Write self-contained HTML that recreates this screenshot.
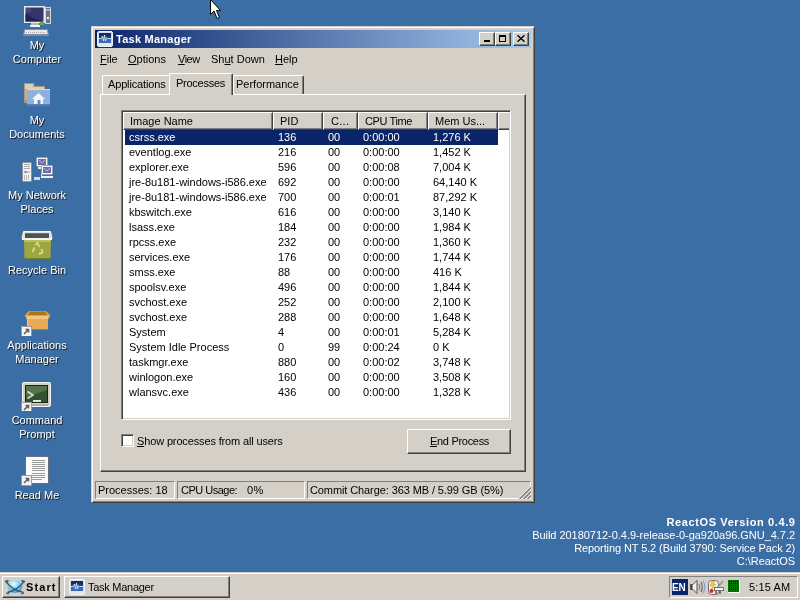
<!DOCTYPE html><html><head><meta charset="utf-8"><style>
*{margin:0;padding:0;box-sizing:border-box}
html,body{width:800px;height:600px;overflow:hidden}
body{background:#3A6EA5;font-family:"Liberation Sans",sans-serif;font-size:11px;color:#000;position:relative}
.a{position:absolute}
.t{position:absolute;white-space:nowrap;line-height:13px;transform:translateZ(0)}
.rz{position:absolute;background:#D4D0C8;border-top:1px solid #fff;border-left:1px solid #fff;border-right:1px solid #404040;border-bottom:1px solid #404040;box-shadow:inset -1px -1px 0 #808080}
.sk{position:absolute;border-top:1px solid #808080;border-left:1px solid #808080;border-right:1px solid #fff;border-bottom:1px solid #fff}
.u{text-decoration:underline;text-underline-offset:1px}
.dl{position:absolute;white-space:nowrap;line-height:13px;color:#fff;text-align:center;text-shadow:1px 1px 0 #1a1a1a;transform:translateZ(0)}
.row{position:absolute;left:0;height:15px;width:386px}
.c{position:absolute;top:0;white-space:nowrap;line-height:15px;transform:translateZ(0)}
</style></head><body>
<svg class="a" style="left:21px;top:4px" width="32" height="32" viewBox="0 0 32 32"><rect x="3" y="2" width="21" height="17" fill="#e4eaf0"/>
<rect x="4.5" y="3.5" width="18" height="14" fill="#34366a"/>
<path d="M4.5 10 L12 14 L22.5 17.5 H4.5Z" fill="#22244e"/>
<rect x="5" y="4" width="5" height="4" fill="#46487c"/>
<rect x="10" y="19" width="8" height="2" fill="#b8b8b8"/>
<rect x="9" y="21" width="10" height="2" fill="#f4f4f4"/>
<rect x="24" y="3" width="6" height="17" fill="#d4d8d0"/>
<rect x="25" y="4" width="4" height="15" fill="#6c7488"/>
<rect x="25" y="5" width="4" height="2" fill="#a0a8b8"/>
<circle cx="27" cy="14" r="1.3" fill="#e8e8e8"/>
<rect x="19" y="18" width="4" height="3" fill="#6aa84a"/>
<path d="M3 25H27L28 32H2Z" fill="#8a8a94"/>
<path d="M4 26H26L26.5 30H3.5Z" fill="#e8e8e8"/>
<path d="M5 28.5H25" stroke="#a8a8b0" stroke-width="1" stroke-dasharray="1,1"/></svg>
<div class="dl" style="left:0;width:74px;top:38px;line-height:14px">My</div>
<div class="dl" style="left:0;width:74px;top:52px;line-height:14px">Computer</div>
<svg class="a" style="left:21px;top:79px" width="32" height="32" viewBox="0 0 32 32"><path d="M3 4H13L14 7H24V24H3Z" fill="#a89a80"/>
<path d="M4 5H12V8H23V10H4Z" fill="#dcd0b4"/>
<path d="M4 12H6M4 14H6M4 16H6M4 18H6M4 20H6" stroke="#d8ccb0"/>
<rect x="6" y="10" width="23" height="16" fill="#8fb0dc"/>
<rect x="6" y="10" width="23" height="1" fill="#c8dcf4"/>
<rect x="6" y="25" width="23" height="2" fill="#5a7cb0"/>
<path d="M17.5 14L11 20H13V25H22V20H24Z" fill="#f4f6fa"/>
<rect x="16.5" y="21" width="3" height="4" fill="#6a8cc0"/></svg>
<div class="dl" style="left:0;width:74px;top:113px;line-height:14px">My</div>
<div class="dl" style="left:0;width:74px;top:127px;line-height:14px">Documents</div>
<svg class="a" style="left:21px;top:154px" width="32" height="32" viewBox="0 0 32 32"><rect x="1.5" y="8.5" width="9" height="19" rx="1" fill="#f4f4f4" stroke="#8a8e96"/>
<rect x="3" y="10" width="6" height="1" fill="#a8a8a8"/><rect x="3" y="12" width="6" height="1" fill="#a8a8a8"/><rect x="3" y="14" width="6" height="1" fill="#a8a8a8"/>
<circle cx="4.5" cy="18" r="1.3" fill="#888"/><rect x="6" y="17.5" width="3" height="1" fill="#999"/>
<path d="M3.5 21V26M5.5 21V26M7.5 21V26" stroke="#b8b8b8"/>
<rect x="15.5" y="3.5" width="11" height="9" rx="1" fill="#f6f6fa" stroke="#9ca0ac"/>
<rect x="17" y="5" width="8" height="6" fill="#6a70a8"/>
<path d="M18 6L21 9L24 6" stroke="#b0b8e0" fill="none"/>
<rect x="17" y="13" width="8" height="2" fill="#f0f0f0"/>
<rect x="20" y="15" width="1" height="7" fill="#e0e0e0"/>
<rect x="20.5" y="11.5" width="11" height="9" rx="1" fill="#f6f6fa" stroke="#9ca0ac"/>
<rect x="22" y="13" width="8" height="6" fill="#6a70a8"/>
<path d="M23 14L26 17L29 14" stroke="#b0b8e0" fill="none"/>
<rect x="20" y="22" width="12" height="2" fill="#f0f0f0"/>
<rect x="13" y="23" width="6" height="3" fill="#d8d8d8"/></svg>
<div class="dl" style="left:0;width:74px;top:188px;line-height:14px">My Network</div>
<div class="dl" style="left:0;width:74px;top:202px;line-height:14px">Places</div>
<svg class="a" style="left:21px;top:229px" width="32" height="32" viewBox="0 0 32 32"><path d="M2.5 2.5H29.5L31 9.5H1Z" fill="#dfe4dc" stroke="#f4f6f0"/>
<rect x="4" y="4" width="24" height="5" fill="#505250"/>
<rect x="4" y="4" width="24" height="1" fill="#707270"/>
<rect x="1" y="9" width="30" height="2" fill="#f4f6f0"/>
<path d="M3 11H30L29.5 30H3.5Z" fill="#9ea640"/>
<path d="M3 11H30L29.8 13H3.2Z" fill="#b8c060"/>
<rect x="3.5" y="29" width="26" height="1" fill="#707c26"/>
<path d="M14 16L16.5 14L18.5 18M11.5 23L13.5 18.5M18 25L21.5 23.5L20.5 20" stroke="#d0d890" stroke-width="2" fill="none"/></svg>
<div class="dl" style="left:0;width:74px;top:263px;line-height:14px">Recycle Bin</div>
<svg class="a" style="left:21px;top:304px" width="32" height="32" viewBox="0 0 32 32"><path d="M8 7H25L29.5 11.5L27 15H6L3.5 11.5Z" fill="#dca448"/>
<path d="M9 7.5H24L26 11H7Z" fill="#a87420"/>
<rect x="5.5" y="12" width="22" height="3" fill="#f2c880"/>
<rect x="6" y="15" width="21" height="11" fill="#e8aa56"/>
<rect x="6" y="15" width="1" height="11" fill="#f6cc8a"/>
<rect x="6" y="25" width="21" height="1" fill="#b07830"/><g transform="translate(0,22)"><rect x="0.5" y="0.5" width="10" height="10" fill="#f4f4f4" stroke="#9a9a9a"/><path d="M3 8L7.5 3.5M4.5 3.5H7.5V6.5" stroke="#606060" stroke-width="1.6" fill="none"/></g></svg>
<div class="dl" style="left:0;width:74px;top:338px;line-height:14px">Applications</div>
<div class="dl" style="left:0;width:74px;top:352px;line-height:14px">Manager</div>
<svg class="a" style="left:21px;top:379px" width="32" height="32" viewBox="0 0 32 32"><rect x="1" y="3" width="29" height="25" rx="2" fill="#d0d0c8"/>
<rect x="1.5" y="3.5" width="28" height="24" rx="2" fill="none" stroke="#f4f4f0"/>
<rect x="4" y="6" width="23" height="18" fill="#18241a"/>
<rect x="5" y="7" width="21" height="16" fill="#34502e"/>
<path d="M5 7H26V11L5 18Z" fill="#56744c"/>
<path d="M6.5 12.5L12 16L6.5 19.5" stroke="#cce8c0" stroke-width="1.6" fill="none"/>
<rect x="12" y="21" width="8" height="2" fill="#d8ecd0"/>
<rect x="4" y="25" width="23" height="2" fill="#b0b0a8"/><g transform="translate(0,23)"><rect x="0.5" y="0.5" width="10" height="10" fill="#f4f4f4" stroke="#9a9a9a"/><path d="M3 8L7.5 3.5M4.5 3.5H7.5V6.5" stroke="#606060" stroke-width="1.6" fill="none"/></g></svg>
<div class="dl" style="left:0;width:74px;top:413px;line-height:14px">Command</div>
<div class="dl" style="left:0;width:74px;top:427px;line-height:14px">Prompt</div>
<svg class="a" style="left:21px;top:454px" width="32" height="32" viewBox="0 0 32 32"><rect x="4" y="2" width="24" height="28" fill="#6a7080"/>
<rect x="5" y="3" width="22" height="26" fill="#fbfbfb"/>
<path d="M11 6.5H24M11 8.5H24M11 10.5H24M11 12.5H24M11 14.5H24M11 16.5H24M11 19.5H24M11 21.5H24M11 23.5H24M11 25.5H21" stroke="#9a9a9a" stroke-width="1"/><g transform="translate(0,21)"><rect x="0.5" y="0.5" width="10" height="10" fill="#f4f4f4" stroke="#9a9a9a"/><path d="M3 8L7.5 3.5M4.5 3.5H7.5V6.5" stroke="#606060" stroke-width="1.6" fill="none"/></g></svg>
<div class="dl" style="left:0;width:74px;top:488px;line-height:14px">Read Me</div>
<div class="a" style="left:91px;top:26px;width:444px;height:477px;background:#D4D0C8;border-top:1px solid #D4D0C8;border-left:1px solid #D4D0C8;border-right:1px solid #404040;border-bottom:1px solid #404040;box-shadow:inset 1px 1px 0 #fff,inset -1px -1px 0 #808080"></div>
<div class="a" style="left:95px;top:30px;width:436px;height:18px;background:linear-gradient(to right,#0A246A,#A6CAF0)"></div>
<svg class="a" style="left:97px;top:31px" width="16" height="16" viewBox="0 0 16 16">
<rect x="0.5" y="0.5" width="15" height="15" rx="1.5" fill="#d0dcec" stroke="#eef4fa"/>
<rect x="2" y="2" width="12" height="10" fill="#243c78"/>
<rect x="2" y="2" width="12" height="3" fill="#1c2c60"/>
<rect x="2" y="8" width="12" height="4" fill="#4068b8"/>
<polyline points="2,7.5 4.5,7.5 5.5,5 6.5,10 7.5,4 8.5,10 9.5,6.5 10.5,7.5 14,7.5" fill="none" stroke="#c8f4f4" stroke-width="0.9"/>
<rect x="1.5" y="12.5" width="13" height="2" fill="#e4eaf2"/>
</svg>
<div class="t" style="left:116px;top:33px;color:#fff;font-weight:bold;font-size:11px;letter-spacing:0.25px">Task Manager</div>
<div class="rz" style="left:479px;top:32px;width:16px;height:14px"><div class="a" style="left:4px;top:7px;width:6px;height:2px;background:#000"></div></div>
<div class="rz" style="left:495px;top:32px;width:16px;height:14px"><div class="a" style="left:3px;top:2px;width:7px;height:7px;border:1px solid #000;border-top-width:2px"></div></div>
<div class="rz" style="left:513px;top:32px;width:16px;height:14px"><svg class="a" style="left:3px;top:2px" width="8" height="7" viewBox="0 0 8 7"><path d="M0.5 0.3L7.5 6.7M7.5 0.3L0.5 6.7" stroke="#000" stroke-width="1.4" fill="none"/></svg></div>
<div class="t" style="left:100px;top:53px;letter-spacing:0px"><span class="u">F</span>ile</div>
<div class="t" style="left:128px;top:53px;letter-spacing:0px"><span class="u">O</span>ptions</div>
<div class="t" style="left:178px;top:53px;letter-spacing:-0.5px"><span class="u">V</span>iew</div>
<div class="t" style="left:211px;top:53px;letter-spacing:0px">Sh<span class="u">u</span>t Down</div>
<div class="t" style="left:275px;top:53px;letter-spacing:0px"><span class="u">H</span>elp</div>
<div class="a" style="left:100px;top:94px;width:426px;height:378px;background:#D4D0C8;border-top:1px solid #fff;border-left:1px solid #fff;border-right:1px solid #404040;border-bottom:1px solid #404040;box-shadow:inset -1px -1px 0 #808080"></div>
<div class="a" style="left:102px;top:75px;width:69px;height:19px;background:#D4D0C8;border-top:1px solid #fff;border-left:1px solid #fff;border-right:1px solid #404040;box-shadow:inset -1px 0 0 #808080;border-top-left-radius:2px;border-top-right-radius:2px"></div>
<div class="t" style="left:108px;top:78px;letter-spacing:-0.15px">Applications</div>
<div class="a" style="left:233px;top:75px;width:71px;height:19px;background:#D4D0C8;border-top:1px solid #fff;border-left:1px solid #fff;border-right:1px solid #404040;box-shadow:inset -1px 0 0 #808080;border-top-left-radius:2px;border-top-right-radius:2px"></div>
<div class="t" style="left:236px;top:78px;letter-spacing:0px">Performance</div>
<div class="a" style="left:169px;top:73px;width:64px;height:22px;background:#D4D0C8;border-top:1px solid #fff;border-left:1px solid #fff;border-right:1px solid #404040;box-shadow:inset -1px 0 0 #808080;border-top-left-radius:2px;border-top-right-radius:2px"></div>
<div class="t" style="left:176px;top:77px;letter-spacing:-0.25px">Processes</div>
<div class="a" style="left:121px;top:110px;width:390px;height:310px;background:#fff;border-top:1px solid #808080;border-left:1px solid #808080;border-right:1px solid #fff;border-bottom:1px solid #fff;box-shadow:inset 1px 1px 0 #404040,inset -1px -1px 0 #D4D0C8"></div>
<div class="a" style="left:123px;top:112px;width:386px;height:18px;overflow:hidden">
<div class="rz" style="left:0px;top:0;width:150px;height:18px"></div>
<div class="t" style="left:7px;top:3px;letter-spacing:0px">Image Name</div>
<div class="rz" style="left:150px;top:0;width:50px;height:18px"></div>
<div class="t" style="left:157px;top:3px;letter-spacing:0px">PID</div>
<div class="rz" style="left:200px;top:0;width:35px;height:18px"></div>
<div class="t" style="left:208px;top:3px;letter-spacing:0.3px">C...</div>
<div class="rz" style="left:235px;top:0;width:70px;height:18px"></div>
<div class="t" style="left:242px;top:3px;letter-spacing:-0.4px">CPU Time</div>
<div class="rz" style="left:305px;top:0;width:70px;height:18px"></div>
<div class="t" style="left:312px;top:3px;letter-spacing:0px">Mem Us...</div>
<div class="a" style="left:375px;top:0;width:11px;height:18px;background:#D4D0C8;border-top:1px solid #fff;border-left:1px solid #fff;border-bottom:1px solid #404040;box-shadow:inset 0 -1px 0 #808080"></div>
</div>
<div class="a" style="left:123px;top:130px;width:386px;height:288px;overflow:hidden">
<div class="a" style="left:2px;top:0px;width:373px;height:15px;background:#0A246A"></div>
<div class="c" style="left:6px;top:0px;color:#fff">csrss.exe</div>
<div class="c" style="left:155px;top:0px;color:#fff">136</div>
<div class="c" style="left:205px;top:0px;color:#fff">00</div>
<div class="c" style="left:240px;top:0px;color:#fff">0:00:00</div>
<div class="c" style="left:310px;top:0px;color:#fff">1,276 K</div>
<div class="c" style="left:6px;top:15px;color:#000">eventlog.exe</div>
<div class="c" style="left:155px;top:15px;color:#000">216</div>
<div class="c" style="left:205px;top:15px;color:#000">00</div>
<div class="c" style="left:240px;top:15px;color:#000">0:00:00</div>
<div class="c" style="left:310px;top:15px;color:#000">1,452 K</div>
<div class="c" style="left:6px;top:30px;color:#000">explorer.exe</div>
<div class="c" style="left:155px;top:30px;color:#000">596</div>
<div class="c" style="left:205px;top:30px;color:#000">00</div>
<div class="c" style="left:240px;top:30px;color:#000">0:00:08</div>
<div class="c" style="left:310px;top:30px;color:#000">7,004 K</div>
<div class="c" style="left:6px;top:45px;color:#000">jre-8u181-windows-i586.exe</div>
<div class="c" style="left:155px;top:45px;color:#000">692</div>
<div class="c" style="left:205px;top:45px;color:#000">00</div>
<div class="c" style="left:240px;top:45px;color:#000">0:00:00</div>
<div class="c" style="left:310px;top:45px;color:#000">64,140 K</div>
<div class="c" style="left:6px;top:60px;color:#000">jre-8u181-windows-i586.exe</div>
<div class="c" style="left:155px;top:60px;color:#000">700</div>
<div class="c" style="left:205px;top:60px;color:#000">00</div>
<div class="c" style="left:240px;top:60px;color:#000">0:00:01</div>
<div class="c" style="left:310px;top:60px;color:#000">87,292 K</div>
<div class="c" style="left:6px;top:75px;color:#000">kbswitch.exe</div>
<div class="c" style="left:155px;top:75px;color:#000">616</div>
<div class="c" style="left:205px;top:75px;color:#000">00</div>
<div class="c" style="left:240px;top:75px;color:#000">0:00:00</div>
<div class="c" style="left:310px;top:75px;color:#000">3,140 K</div>
<div class="c" style="left:6px;top:90px;color:#000">lsass.exe</div>
<div class="c" style="left:155px;top:90px;color:#000">184</div>
<div class="c" style="left:205px;top:90px;color:#000">00</div>
<div class="c" style="left:240px;top:90px;color:#000">0:00:00</div>
<div class="c" style="left:310px;top:90px;color:#000">1,984 K</div>
<div class="c" style="left:6px;top:105px;color:#000">rpcss.exe</div>
<div class="c" style="left:155px;top:105px;color:#000">232</div>
<div class="c" style="left:205px;top:105px;color:#000">00</div>
<div class="c" style="left:240px;top:105px;color:#000">0:00:00</div>
<div class="c" style="left:310px;top:105px;color:#000">1,360 K</div>
<div class="c" style="left:6px;top:120px;color:#000">services.exe</div>
<div class="c" style="left:155px;top:120px;color:#000">176</div>
<div class="c" style="left:205px;top:120px;color:#000">00</div>
<div class="c" style="left:240px;top:120px;color:#000">0:00:00</div>
<div class="c" style="left:310px;top:120px;color:#000">1,744 K</div>
<div class="c" style="left:6px;top:135px;color:#000">smss.exe</div>
<div class="c" style="left:155px;top:135px;color:#000">88</div>
<div class="c" style="left:205px;top:135px;color:#000">00</div>
<div class="c" style="left:240px;top:135px;color:#000">0:00:00</div>
<div class="c" style="left:310px;top:135px;color:#000">416 K</div>
<div class="c" style="left:6px;top:150px;color:#000">spoolsv.exe</div>
<div class="c" style="left:155px;top:150px;color:#000">496</div>
<div class="c" style="left:205px;top:150px;color:#000">00</div>
<div class="c" style="left:240px;top:150px;color:#000">0:00:00</div>
<div class="c" style="left:310px;top:150px;color:#000">1,844 K</div>
<div class="c" style="left:6px;top:165px;color:#000">svchost.exe</div>
<div class="c" style="left:155px;top:165px;color:#000">252</div>
<div class="c" style="left:205px;top:165px;color:#000">00</div>
<div class="c" style="left:240px;top:165px;color:#000">0:00:00</div>
<div class="c" style="left:310px;top:165px;color:#000">2,100 K</div>
<div class="c" style="left:6px;top:180px;color:#000">svchost.exe</div>
<div class="c" style="left:155px;top:180px;color:#000">288</div>
<div class="c" style="left:205px;top:180px;color:#000">00</div>
<div class="c" style="left:240px;top:180px;color:#000">0:00:00</div>
<div class="c" style="left:310px;top:180px;color:#000">1,648 K</div>
<div class="c" style="left:6px;top:195px;color:#000">System</div>
<div class="c" style="left:155px;top:195px;color:#000">4</div>
<div class="c" style="left:205px;top:195px;color:#000">00</div>
<div class="c" style="left:240px;top:195px;color:#000">0:00:01</div>
<div class="c" style="left:310px;top:195px;color:#000">5,284 K</div>
<div class="c" style="left:6px;top:210px;color:#000">System Idle Process</div>
<div class="c" style="left:155px;top:210px;color:#000">0</div>
<div class="c" style="left:205px;top:210px;color:#000">99</div>
<div class="c" style="left:240px;top:210px;color:#000">0:00:24</div>
<div class="c" style="left:310px;top:210px;color:#000">0 K</div>
<div class="c" style="left:6px;top:225px;color:#000">taskmgr.exe</div>
<div class="c" style="left:155px;top:225px;color:#000">880</div>
<div class="c" style="left:205px;top:225px;color:#000">00</div>
<div class="c" style="left:240px;top:225px;color:#000">0:00:02</div>
<div class="c" style="left:310px;top:225px;color:#000">3,748 K</div>
<div class="c" style="left:6px;top:240px;color:#000">winlogon.exe</div>
<div class="c" style="left:155px;top:240px;color:#000">160</div>
<div class="c" style="left:205px;top:240px;color:#000">00</div>
<div class="c" style="left:240px;top:240px;color:#000">0:00:00</div>
<div class="c" style="left:310px;top:240px;color:#000">3,508 K</div>
<div class="c" style="left:6px;top:255px;color:#000">wlansvc.exe</div>
<div class="c" style="left:155px;top:255px;color:#000">436</div>
<div class="c" style="left:205px;top:255px;color:#000">00</div>
<div class="c" style="left:240px;top:255px;color:#000">0:00:00</div>
<div class="c" style="left:310px;top:255px;color:#000">1,328 K</div>
</div>
<div class="a" style="left:121px;top:434px;width:13px;height:13px;background:#fff;border-top:1px solid #808080;border-left:1px solid #808080;border-right:1px solid #fff;border-bottom:1px solid #fff;box-shadow:inset 1px 1px 0 #404040,inset -1px -1px 0 #D4D0C8"></div>
<div class="t" style="left:137px;top:435px;letter-spacing:-0.14px"><span class="u">S</span>how processes from all users</div>
<div class="rz" style="left:407px;top:429px;width:104px;height:25px"></div>
<div class="t" style="left:430px;top:435px;letter-spacing:-0.3px"><span class="u">E</span>nd Process</div>
<div class="sk" style="left:95px;top:481px;width:80px;height:18px"></div>
<div class="t" style="left:98px;top:484px">Processes: 18</div>
<div class="sk" style="left:177px;top:481px;width:128px;height:18px"></div>
<div class="t" style="left:181px;top:484px"><span style="letter-spacing:-0.5px">CPU Usage:</span></div>
<div class="t" style="left:247px;top:484px;letter-spacing:0.5px">0%</div>
<div class="sk" style="left:307px;top:481px;width:224px;height:18px"></div>
<div class="t" style="left:310px;top:484px"><span style="letter-spacing:-0.1px">Commit Charge: 363 MB / 5.99 GB (5%)</span></div>
<svg class="a" style="left:517px;top:485px" width="14" height="14" viewBox="0 0 14 14">
<path d="M13.5 1.5L1.5 13.5M13.5 5.5L5.5 13.5M13.5 9.5L9.5 13.5" stroke="#fff" stroke-width="1"/>
<path d="M14 2.5L2.5 14M14 6.5L6.5 14M14 10.5L10.5 14" stroke="#808080" stroke-width="1.6"/>
</svg>
<div class="t" style="right:5px;top:516px;color:#fff;font-weight:bold;letter-spacing:0.62px;margin-right:-0.62px">ReactOS Version 0.4.9</div>
<div class="t" style="right:5px;top:529px;color:#fff;letter-spacing:-0.04px;margin-right:-0.04px">Build 20180712-0.4.9-release-0-ga920a96.GNU_4.7.2</div>
<div class="t" style="right:5px;top:542px;color:#fff;letter-spacing:-0.1px;margin-right:-0.1px">Reporting NT 5.2 (Build 3790: Service Pack 2)</div>
<div class="t" style="right:5px;top:555px;color:#fff;letter-spacing:-0.05px;margin-right:-0.05px">C:\ReactOS</div>
<div class="a" style="left:0;top:572px;width:800px;height:28px;background:#D4D0C8;border-top:1px solid #D4D0C8;box-shadow:inset 0 1px 0 #fff"></div>
<div class="rz" style="left:2px;top:576px;width:58px;height:22px"></div>
<div class="t" style="left:26px;top:581px;font-weight:bold;letter-spacing:1.1px">Start</div>
<svg class="a" style="left:5px;top:579px" width="20" height="16" viewBox="0 0 20 16">
<defs><radialGradient id="sg" cx="0.4" cy="0.3" r="0.7"><stop offset="0" stop-color="#f0fcff"/><stop offset="0.45" stop-color="#98d8f0"/><stop offset="1" stop-color="#4aa0d0"/></radialGradient></defs>
<ellipse cx="10" cy="7.5" rx="7.5" ry="6.5" fill="url(#sg)"/>
<path d="M1.5 2.5Q3 6 9 10Q13 12.5 17.5 13" stroke="#2a5a80" stroke-width="1.5" fill="none"/>
<path d="M18.5 2.5Q17 6 11 10Q7 12.5 2.5 13.5" stroke="#2a5a80" stroke-width="1.5" fill="none"/>
<path d="M0.5 3.5Q1 1.5 3.5 2M19.5 3.5Q19 1.5 16.5 2" stroke="#506070" stroke-width="2" fill="none"/>
<path d="M2 13.5Q1.5 15 4 14.5M18 13Q19.5 14.5 16 14.5" stroke="#506070" stroke-width="1.5" fill="none"/>
</svg>
<div class="rz" style="left:64px;top:576px;width:166px;height:22px"></div>
<div class="t" style="left:88px;top:581px;letter-spacing:-0.27px">Task Manager</div>
<svg class="a" style="left:69px;top:579px" width="16" height="16" viewBox="0 0 16 16">
<rect x="0.5" y="0.5" width="15" height="15" rx="1.5" fill="#d0dcec" stroke="#eef4fa"/>
<rect x="2" y="2" width="12" height="10" fill="#243c78"/>
<rect x="2" y="2" width="12" height="3" fill="#1c2c60"/>
<rect x="2" y="8" width="12" height="4" fill="#4068b8"/>
<polyline points="2,7.5 4.5,7.5 5.5,5 6.5,10 7.5,4 8.5,10 9.5,6.5 10.5,7.5 14,7.5" fill="none" stroke="#c8f4f4" stroke-width="0.9"/>
<rect x="1.5" y="12.5" width="13" height="2" fill="#e4eaf2"/>
</svg>
<div class="sk" style="left:669px;top:576px;width:129px;height:22px"></div>
<div class="t" style="left:749px;top:581px;letter-spacing:0.15px">5:15 AM</div>
<div class="a" style="left:672px;top:579px;width:16px;height:16px;background:#0A246A"></div>
<div class="t" style="left:672px;top:581px;color:#fff;font-weight:bold;font-size:10px;letter-spacing:-0.2px">EN</div>
<svg class="a" style="left:689px;top:579px" width="17" height="16" viewBox="0 0 17 16">
<path d="M1.5 5.5H4L8 1.5V14.5L4 10.5H1.5Z" fill="#f0f0f0" stroke="#505050" stroke-width="1"/>
<rect x="2" y="6" width="1.5" height="4" fill="#404040"/>
<path d="M10 5Q11.5 8 10 11" stroke="#6a7a90" stroke-width="1.1" fill="none"/>
<path d="M12 3Q14.5 8 12 13" stroke="#50607a" stroke-width="1.1" fill="none"/>
<path d="M14 1.5Q17.5 8 14 14.5" stroke="#8aa0c0" stroke-width="1.1" fill="none"/>
</svg>
<svg class="a" style="left:708px;top:579px" width="17" height="16" viewBox="0 0 17 16">
<rect x="0.5" y="1.5" width="10" height="14" rx="3" fill="#f4eef0" stroke="#787070"/>
<path d="M4 2L2 7H5L3 11L8 5H5L7 2Z" fill="#f0d040" stroke="#c8a020" stroke-width="0.5"/>
<circle cx="3.5" cy="12" r="2" fill="#e02020"/>
<path d="M9 9L15 2" stroke="#707070" stroke-width="1.5"/>
<path d="M9 9L15 2" stroke="#e0e0e0" stroke-width="0.6"/>
<rect x="6.5" y="8.5" width="9" height="3" fill="#f8f8f8" stroke="#707070"/>
<path d="M8 12V15M12 12V15" stroke="#606060" stroke-width="1.6"/>
</svg>
<svg class="a" style="left:728px;top:580px" width="12" height="13" viewBox="0 0 12 13">
<rect x="0" y="0" width="12" height="13" fill="#f4fff4"/>
<rect x="0" y="0" width="11" height="12" fill="#007800"/>
<g fill="#002800">
<rect x="1" y="1" width="1" height="1"/><rect x="3" y="1" width="1" height="1"/><rect x="5" y="1" width="1" height="1"/><rect x="7" y="1" width="1" height="1"/><rect x="9" y="1" width="1" height="1"/>
<rect x="1" y="3" width="1" height="1"/><rect x="3" y="3" width="1" height="1"/><rect x="5" y="3" width="1" height="1"/><rect x="7" y="3" width="1" height="1"/><rect x="9" y="3" width="1" height="1"/>
<rect x="1" y="5" width="1" height="1"/><rect x="3" y="5" width="1" height="1"/><rect x="5" y="5" width="1" height="1"/><rect x="7" y="5" width="1" height="1"/><rect x="9" y="5" width="1" height="1"/>
<rect x="1" y="7" width="1" height="1"/><rect x="3" y="7" width="1" height="1"/><rect x="5" y="7" width="1" height="1"/><rect x="7" y="7" width="1" height="1"/><rect x="9" y="7" width="1" height="1"/>
<rect x="1" y="9" width="1" height="1"/><rect x="3" y="9" width="1" height="1"/><rect x="5" y="9" width="1" height="1"/><rect x="7" y="9" width="1" height="1"/><rect x="9" y="9" width="1" height="1"/>
</g></svg>
<svg class="a" style="left:209px;top:-2px" width="14" height="23" viewBox="0 0 14 23">
<path d="M1.5 1.5V16.5L5 13L8 20.5L10.5 19.5L7.5 12.5H11.5Z" fill="#fff" stroke="#000" stroke-width="1"/>
</svg>
</body></html>
